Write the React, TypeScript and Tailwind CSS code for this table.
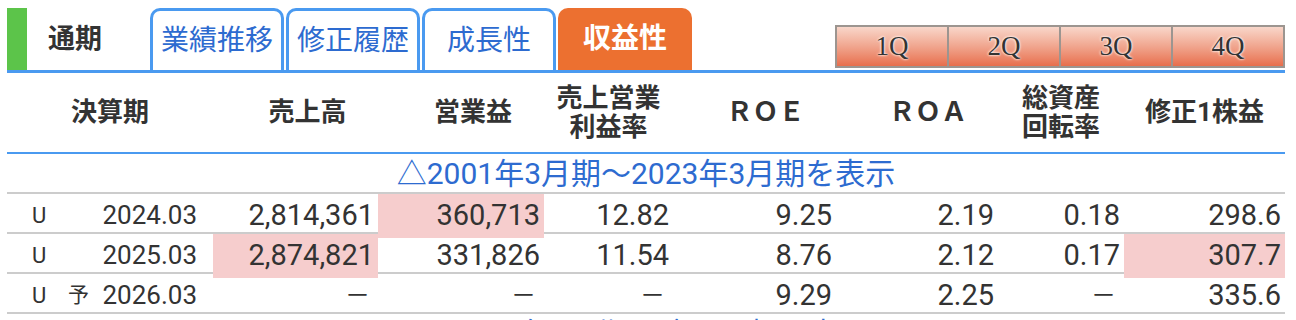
import React from 'react';

const cols = 'grid grid-cols-[206px_165px_166px_129px_163px_162px_126px_161px]';
const num = "font-['Roboto','Noto_Sans_CJK_JP',sans-serif]";

type Row = {
    mark: string;
    yo: string;
    period: string;
    values: string[];
    pink: number[];
};

const rows: Row[] = [
    { mark: 'U', yo: '', period: '2024.03', values: ['2,814,361', '360,713', '12.82', '9.25', '2.19', '0.18', '298.6'], pink: [1] },
    { mark: 'U', yo: '', period: '2025.03', values: ['2,874,821', '331,826', '11.54', '8.76', '2.12', '0.17', '307.7'], pink: [0, 6] },
    { mark: 'U', yo: '予', period: '2026.03', values: ['－', '－', '－', '9.29', '2.25', '－', '335.6'], pink: [] },
];

const tabs = ['業績推移', '修正履歴', '成長性'];
const quarters = ['1Q', '2Q', '3Q', '4Q'];

const App: React.FC = () => {
    return (
        <div className="w-[1296px] h-[320px] overflow-hidden bg-white pt-[8px] pl-[7px] pr-[11px] text-[#333] font-['Roboto','Noto_Sans_CJK_JP',sans-serif]">
            {/* tab bar */}
            <div className="flex items-end h-[62px]">
                <div className="w-[20px] h-full bg-[#5cc44a]" />
                <div className="w-[121px] h-full flex items-center pl-[21px] text-[27px] font-bold">通期</div>
                <div className="flex gap-[2px] h-full ml-[2px]">
                    {tabs.map((t) => (
                        <div key={t} className="w-[134px] h-full flex items-center justify-center border-[3px] border-b-0 border-[#4a9af0] rounded-t-[10px] text-[28px] text-[#2d6bd0]">
                            {t}
                        </div>
                    ))}
                    <div className="w-[134px] h-full flex items-center justify-center rounded-t-[10px] bg-[#ec7030] text-[28px] font-bold text-white">収益性</div>
                </div>
                <div className="ml-auto mb-[2px] flex gap-[2px] p-[2px] bg-[#9c9590]">
                    {quarters.map((q) => (
                        <div key={q} className="w-[110px] h-[39px] flex items-center justify-center bg-linear-to-b from-[#f8d6ca] via-[#f0a58e] to-[#e76e4c] font-['Liberation_Serif',serif] text-[27px] leading-none text-[#333] [text-shadow:0_0_3px_#fff,0_0_2px_#fff]">
                            {q}
                        </div>
                    ))}
                </div>
            </div>
            <div className="h-[3px] bg-[#4a9af0]" />

            {/* header */}
            <div className={`${cols} h-[79px] items-center text-center font-bold text-[26px] leading-[29px] text-[#333]`}>
                <div>決算期</div>
                <div className="pl-[24px]">売上高</div>
                <div className="pl-[24px]">営業益</div>
                <div>売上営業<br />利益率</div>
                <div className="pl-[22px]">ＲＯＥ</div>
                <div className="pl-[22px]">ＲＯＡ</div>
                <div>総資産<br />回転率</div>
                <div>修正1株益</div>
            </div>
            <div className="h-[2px] bg-[#4a9af0]" />

            <div className="h-[38px] flex items-center justify-center text-[30px] text-[#2d6bd0]">△2001年3月期～2023年3月期を表示</div>
            <div className="h-[2px] bg-[#cccccc]" />

            {rows.map((r) => (
                <div key={r.period}>
                    <div className={`${cols} h-[38px] ${num}`}>
                        <div className="flex items-center pl-[25px] pr-[16px]">
                            <span className="w-[36px] text-[22px]">{r.mark}</span>
                            <span className="text-[21px]">{r.yo}</span>
                            <span className="ml-auto text-[26px]">{r.period}</span>
                        </div>
                        {r.values.map((v, i) => (
                            <div key={i} className={`flex items-center justify-end pr-[4px] text-[29px] ${r.pink.includes(i) ? 'bg-[#f6cdcd]' : ''}`}>
                                {v === '－' ? <span className="pr-[4px] text-[25px]">－</span> : v}
                            </div>
                        ))}
                    </div>
                    <div className="h-[2px] bg-[#cccccc]" />
                </div>
            ))}

            <div className="h-[38px] flex items-center justify-center text-[30px] text-[#2d6bd0]">▽2027年3月期以降の予想を表示</div>
        </div>
    );
};

export default App;
